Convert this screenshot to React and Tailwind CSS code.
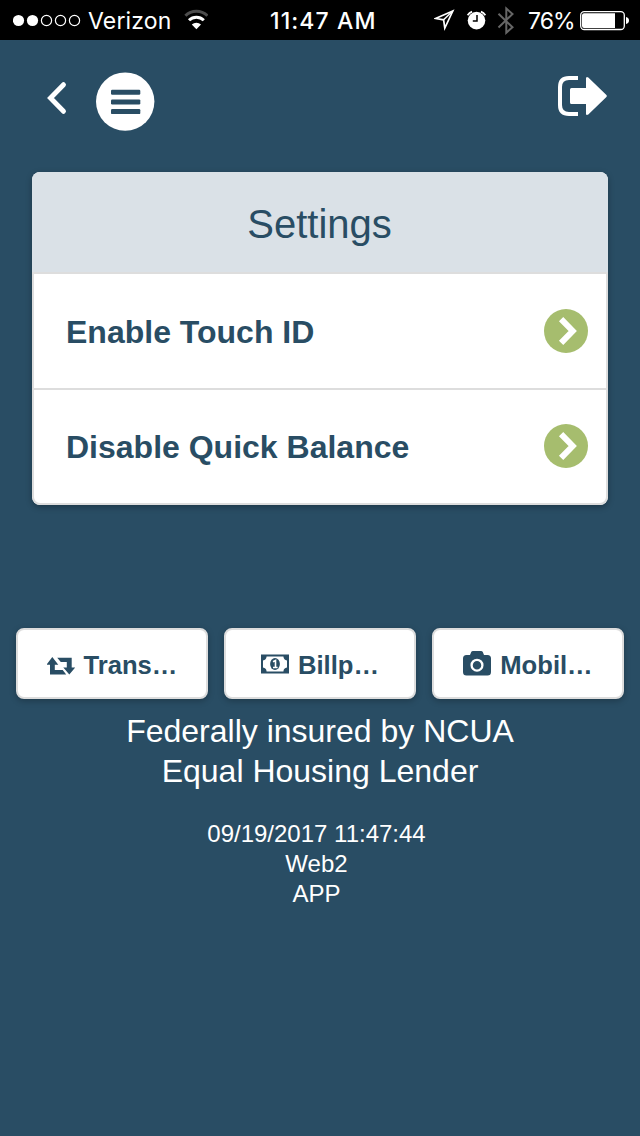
import React from "react";

function StatusBar() {
  return (
    <header className="flex h-10 items-center bg-black pl-[13px] font-['Inter',sans-serif] text-[23px] leading-10 text-white">
      <svg className="h-10 w-[68px] shrink-0" viewBox="0 0 68 40" fill="none" stroke="white" strokeWidth="1.2">
        <circle cx="5.5" cy="20.5" r="5.6" fill="white" stroke="none" />
        <circle cx="19.5" cy="20.5" r="5.6" fill="white" stroke="none" />
        <circle cx="33.5" cy="20.5" r="5.1" />
        <circle cx="47.5" cy="20.5" r="5.1" />
        <circle cx="61.5" cy="20.5" r="5.1" />
      </svg>
      <span className="ml-[7px] w-[96px] shrink-0 whitespace-nowrap pt-0.5 tracking-[0.15px]">Verizon</span>
      <svg className="h-10 w-6 shrink-0" viewBox="0 0 24 40" fill="none">
        <path d="M1.400 15.800a15.500 15.500 0 0 1 22 0" stroke="#4d4d4d" strokeWidth="3" />
        <path d="M5 20.200a10.600 10.600 0 0 1 14.800 0" stroke="white" strokeWidth="3" />
        <path d="M12.400 29.200l-4.600-4.600a6.600 6.600 0 0 1 9.200 0z" fill="white" />
      </svg>
      <span className="ml-[62px] w-[164px] shrink-0 whitespace-nowrap pt-0.5 font-medium tracking-[1.1px]">11:47 AM</span>
      <svg className="h-10 w-[86px] shrink-0" viewBox="434 0 86 40" fill="none">
        <path d="M452.800 11L435.500 18.500L443.600 19.800L444.800 28Z" stroke="white" strokeWidth="1.700" />
        <path d="M452.800 11L443.600 19.800" stroke="white" strokeWidth="1.500" />
        <circle cx="476.500" cy="20.600" r="8.800" fill="white" />
        <path d="M467.600 15.200a10.600 10.600 0 0 1 4.500-3.500M485.400 15.200a10.600 10.600 0 0 0-4.500-3.500" stroke="white" strokeWidth="1.800" />
        <path d="M477 15v6h-4.200" stroke="black" strokeWidth="1.500" />
        <path d="M498.500 13.700l14 13.500-6.200 5.500V8.500l6.200 5.500-14 13.500" stroke="#666" strokeWidth="2" />
      </svg>
      <span className="ml-2 w-[52px] shrink-0 whitespace-nowrap pt-0.5 tracking-[-0.9px]">76%</span>
      <svg className="h-10 w-[49px] shrink-0" viewBox="0 0 49 40" fill="none">
        <rect x=".7" y="11.7" width="43.6" height="17.8" rx="3.5" stroke="white" strokeWidth="1.3" />
        <path d="M4 13.2h31v14.8H4a2 2 0 0 1-2-2V15.2a2 2 0 0 1 2-2z" fill="white" />
        <path d="M46 17q3 .6 3 3.5t-3 3.5z" fill="white" />
      </svg>
    </header>
  );
}

function NavBar() {
  return (
    <nav className="flex h-[132px] items-start justify-between pl-[46px] pr-8 pt-8">
      <div className="flex">
        <button aria-label="Back">
          <svg className="h-[59px] w-[50px]" viewBox="46 72 50 59" fill="none">
            <path d="M63.500 84.700L50.500 98l13 13.300" stroke="white" strokeWidth="4.900" strokeLinecap="round" />
          </svg>
        </button>
        <button aria-label="Menu">
          <svg className="h-[59px] w-[59px]" viewBox="96 72 59 59">
            <circle cx="125.2" cy="101.6" r="29.2" fill="white" />
            <g fill="#294d64">
              <rect x="111" y="89.7" width="29.300" height="5" rx="1.2" />
              <rect x="111" y="99.400" width="29.300" height="5" rx="1.2" />
              <rect x="111" y="109.1" width="29.300" height="5" rx="1.2" />
            </g>
          </svg>
        </button>
      </div>
      <button aria-label="Log out">
        <svg className="h-[59px] w-[52px]" viewBox="556 72 52 59">
          <path d="M578 77.9h-9q-9 0-9 9v18q0 9 9 9h9" fill="none" stroke="white" strokeWidth="4" />
          <path d="M571.5 88H586V78.6q0-2.6 2.3-1.2L606.4 95q1 1 0 2L588.3 114.6q-2.3 1.4-2.3-1.2V104H571.5q-1.5 0-1.5-1.5V89.5q0-1.5 1.5-1.5z" fill="white" />
        </svg>
      </button>
    </nav>
  );
}

function SettingRow({ label, divided }) {
  return (
    <li className={divided ? "flex h-[116px] items-center justify-between border-b-2 border-[#dddddd] pl-8 pr-[18px]" : "flex h-28 items-center justify-between pl-8 pr-[18px]"}>
      <span className="mt-px text-[32px] font-bold leading-10">{label}</span>
      <svg className="h-11 w-11" viewBox="0 0 44 44">
        <circle cx="22" cy="22" r="22" fill="#a6bd6e" />
        <path d="M17.100 10.100L28.700 22L17.100 33.900" fill="none" stroke="white" strokeWidth="6" />
      </svg>
    </li>
  );
}

function TransferIcon() {
  return (
    <svg className="h-6 w-7 shrink-0" viewBox="46.7 652.500 28 24" fill="#294d64">
      <path d="M52 656.500l6 7.700H54.500V669.600h7.900l3.500 4.300H49.700V664.200H46.100zM56.900 657.200h14.500V667h3.500L69 674l-6-7H66.500v-5.400h-6z" />
    </svg>
  );
}

function MoneyIcon() {
  return (
    <svg className="-mt-px h-6 w-7 shrink-0" viewBox="0 0 28 24">
      <path fill="#294d64" fillRule="evenodd" d="M0 2.500h28v19H0zM5.600 4.500Q5.300 8 2 8.400v7.200q3.300.4 3.600 3.900h16.800q.3-3.500 3.600-3.900V8.400q-3.300-.4-3.600-3.900z" />
      <ellipse cx="14" cy="12" rx="4.900" ry="5.900" fill="#294d64" />
      <path d="M12 9.700l2.500-1.200v6.800M12 15.500h4.600" fill="none" stroke="white" strokeWidth="1.600" />
    </svg>
  );
}

function CameraIcon() {
  return (
    <svg className="-mt-0.5 h-[25px] w-7 shrink-0" viewBox="0 0 28 25">
      <path d="M3.500 4H7L8.200 1.100Q8.700 0 10 0h8q1.300 0 1.800 1.100L21 4h3.500Q28 4 28 7.500v13.500q0 3.500-3.500 3.500h-21Q0 24.500 0 21V7.500Q0 4 3.500 4z" fill="#294d64" />
      <circle cx="14" cy="14.200" r="5.400" fill="none" stroke="white" strokeWidth="2.300" />
    </svg>
  );
}

function ActionButton({ icon, label }) {
  return (
    <button className="flex h-[71px] w-48 items-center justify-center rounded-lg border-2 border-[#dddddd] bg-white pt-0.5 text-[25.6px] font-bold leading-8 shadow-[0_2px_6px_rgba(0,0,0,0.25)]">
      {icon}
      <span className="ml-[9px] whitespace-nowrap">{label}</span>
    </button>
  );
}

export default function App() {
  return (
    <div className="flex h-[1136px] w-[640px] flex-col overflow-hidden bg-[#294d64] font-['Liberation_Sans',Arial,sans-serif] text-[#294d64]">
      <StatusBar />
      <NavBar />
      <main>
        <section className="mx-8 h-[333px] overflow-hidden rounded-lg bg-white shadow-[0_2px_6px_rgba(0,0,0,0.3)]">
          <h1 className="h-[100px] bg-[#dae1e7] pt-7 pr-px text-center text-[40px] leading-[48px]">Settings</h1>
          <ul className="h-[233px] rounded-b-lg border-2 border-[#dddddd]">
            <SettingRow label="Enable Touch ID" divided />
            <SettingRow label="Disable Quick Balance" />
          </ul>
        </section>
        <section className="mt-[123px] flex justify-between px-4">
          <ActionButton icon={<TransferIcon />} label="Trans…" />
          <ActionButton icon={<MoneyIcon />} label="Billp…" />
          <ActionButton icon={<CameraIcon />} label="Mobil…" />
        </section>
      </main>
      <footer className="pt-3 text-center text-white">
        <p className="text-[32px] leading-10">Federally insured by NCUA<br />Equal Housing Lender</p>
        <p className="mt-7 pr-[7px] text-[24px] leading-[30px]">09/19/2017 11:47:44<br />Web2<br />APP</p>
      </footer>
    </div>
  );
}
